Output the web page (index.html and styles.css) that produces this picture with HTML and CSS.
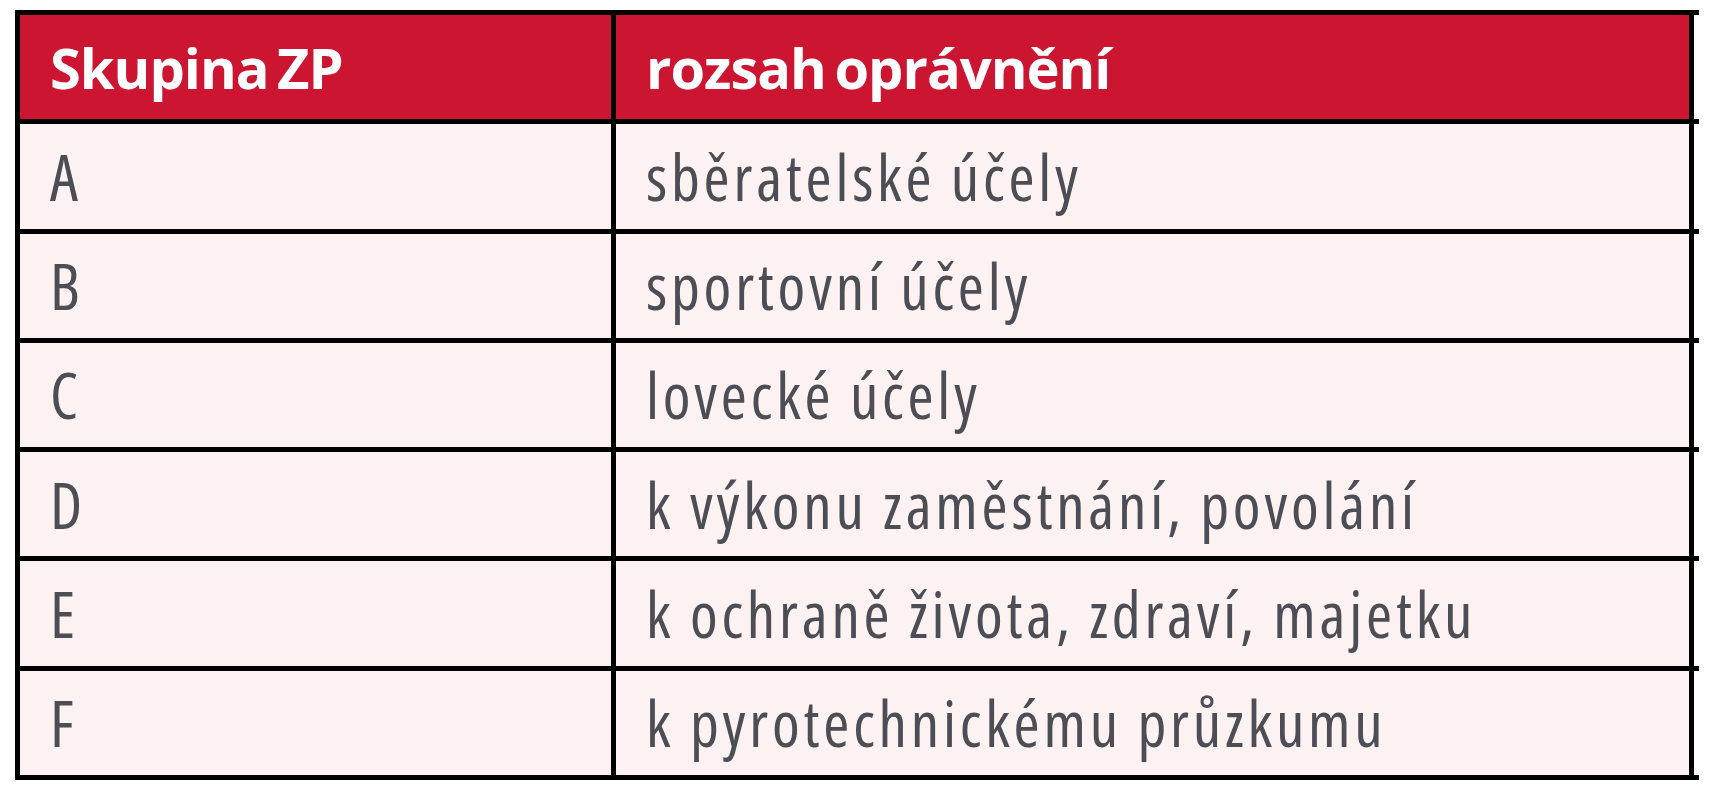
FILE: index.html
```html
<!DOCTYPE html>
<html lang="cs">
<head>
<meta charset="utf-8">
<title>Skupiny ZP</title>
<link rel="stylesheet" href="styles.css">
</head>
<body>
<div class="table">
  <div class="row head">
    <div class="cell c1">Skupina ZP</div>
    <div class="cell c2">rozsah oprávnění</div>
  </div>
  <div class="row">
    <div class="cell c1">A</div>
    <div class="cell c2">sběratelské účely</div>
  </div>
  <div class="row">
    <div class="cell c1">B</div>
    <div class="cell c2">sportovní účely</div>
  </div>
  <div class="row">
    <div class="cell c1">C</div>
    <div class="cell c2">lovecké účely</div>
  </div>
  <div class="row">
    <div class="cell c1">D</div>
    <div class="cell c2">k výkonu zaměstnání, povolání</div>
  </div>
  <div class="row">
    <div class="cell c1">E</div>
    <div class="cell c2">k ochraně života, zdraví, majetku</div>
  </div>
  <div class="row">
    <div class="cell c1">F</div>
    <div class="cell c2">k pyrotechnickému průzkumu</div>
  </div>
</div>
</body>
</html>
```

FILE: styles.css
```css
html, body {
  margin: 0;
  padding: 0;
  background: #ffffff;
}

body {
  font-family: "Open Sans", "DejaVu Sans Condensed", sans-serif;
}

.table {
  margin: 10px 0 0 15px;
  width: 1684px;
  height: 770px;
  box-sizing: border-box;
  border-top: 5px solid #000;
  display: flex;
  flex-direction: column;
}

.row {
  flex: 1;
  display: flex;
  border-bottom: 5px solid #000;
  padding-right: 5px;
}

.cell {
  display: flex;
  align-items: center;
  box-sizing: border-box;
  padding-left: 30px;
  background: #fcf2f1;
  color: #4d4d55;
  font-size: 63px;
  font-stretch: 75%;
  letter-spacing: 3.8px;
  white-space: nowrap;
}

.c1 {
  width: 596px;
  border-left: 5px solid #000;
}

.c2 {
  flex: 1;
  border-left: 5px solid #000;
  border-right: 5px solid #000;
}

.head .cell {
  background: #cc1631;
  color: #ffffff;
  font-weight: bold;
  font-size: 56px;
  font-stretch: 97%;
  letter-spacing: -1px;
  word-spacing: -5px;
}
```
